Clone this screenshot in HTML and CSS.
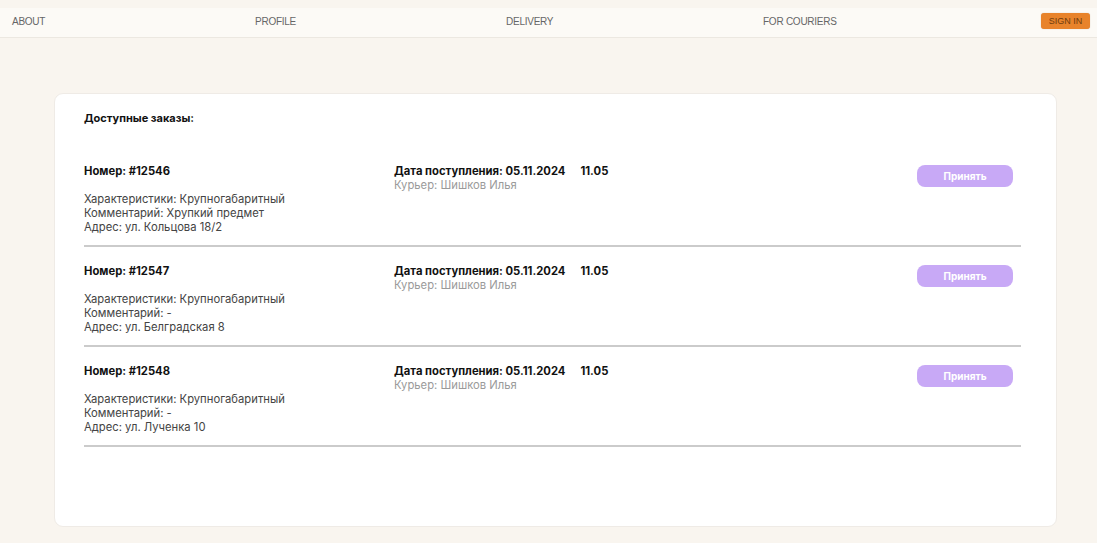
FILE: index.html
```html
<!DOCTYPE html>
<html lang="ru">
<head>
<meta charset="utf-8">
<title>Доступные заказы</title>
<link rel="stylesheet" href="styles.css">
</head>
<body>
<header class="topbar">
  <a class="nav-link" href="#">ABOUT</a>
  <a class="nav-link" href="#">PROFILE</a>
  <a class="nav-link" href="#">DELIVERY</a>
  <a class="nav-link" href="#">FOR COURIERS</a>
  <a class="signin" href="#">SIGN IN</a>
</header>
<main class="card">
  <h1 class="card-title">Доступные заказы:</h1>
  <div class="orders">
    <div class="order">
      <div class="order-info">
        <div class="order-num">Номер: #12546</div>
        <div class="order-details">
          <div>Характеристики: Крупногабаритный</div>
          <div>Комментарий: Хрупкий предмет</div>
          <div>Адрес: ул. Кольцова 18/2</div>
        </div>
      </div>
      <div class="order-meta">
        <div class="order-date">Дата поступления: 05.11.2024<span class="order-time">11.05</span></div>
        <div class="order-courier">Курьер: Шишков Илья</div>
      </div>
      <button class="accept">Принять</button>
    </div>
    <div class="order">
      <div class="order-info">
        <div class="order-num">Номер: #12547</div>
        <div class="order-details">
          <div>Характеристики: Крупногабаритный</div>
          <div>Комментарий: -</div>
          <div>Адрес: ул. Белградская 8</div>
        </div>
      </div>
      <div class="order-meta">
        <div class="order-date">Дата поступления: 05.11.2024<span class="order-time">11.05</span></div>
        <div class="order-courier">Курьер: Шишков Илья</div>
      </div>
      <button class="accept">Принять</button>
    </div>
    <div class="order">
      <div class="order-info">
        <div class="order-num">Номер: #12548</div>
        <div class="order-details">
          <div>Характеристики: Крупногабаритный</div>
          <div>Комментарий: -</div>
          <div>Адрес: ул. Лученка 10</div>
        </div>
      </div>
      <div class="order-meta">
        <div class="order-date">Дата поступления: 05.11.2024<span class="order-time">11.05</span></div>
        <div class="order-courier">Курьер: Шишков Илья</div>
      </div>
      <button class="accept">Принять</button>
    </div>
  </div>
</main>
</body>
</html>
```

FILE: styles.css
```css
* { box-sizing: border-box; }

body {
  margin: 0;
  background: #f9f5ef;
  font-family: Inter, "Noto Sans", sans-serif;
  color: #222;
}

.topbar {
  margin-top: 8px;
  height: 30px;
  background: #fcfaf6;
  border-bottom: 1px solid #ece8e1;
  display: grid;
  grid-template-columns: 243px 251px 257px 278px 49px;
  align-items: center;
  padding: 0 0 4px 12px;
}

.nav-link {
  margin-top: 2px;
  font-family: "Liberation Sans", Arial, sans-serif;
  font-size: 10px;
  color: #666;
  text-decoration: none;
  letter-spacing: -0.25px;
}

.signin {
  font-family: "Liberation Sans", Arial, sans-serif;
  font-size: 9px;
  color: #6e3c0e;
  text-decoration: none;
  background: #e8832b;
  border-radius: 3px;
  width: 49px;
  height: 16px;
  display: flex;
  align-items: center;
  justify-content: center;
  box-shadow: 0 0 1px rgba(120, 60, 0, 0.4);
}

.card {
  margin: 55px 0 0 54px;
  width: 1003px;
  height: 434px;
  background: #fff;
  border: 1px solid #efebe6;
  border-radius: 9px;
  padding: 17px 35px 0 29px;
}

.card-title {
  margin: 0 0 22px;
  font-size: 11px;
  line-height: 14px;
  font-weight: 700;
  color: #111;
}

.order {
  display: grid;
  grid-template-columns: 310px 1fr 96px;
  align-items: start;
  padding: 17px 8px 11px 0;
  border-bottom: 2px solid #cbcbcb;
  font-size: 11.25px;
  line-height: 14px;
}

.order-num,
.order-date {
  font-weight: 700;
  color: #111;
}

.order-details {
  margin-top: 14px;
  color: #444;
}

.order-time {
  margin-left: 15px;
}

.order-courier {
  color: #9a9a9a;
}

.accept {
  margin-top: 1px;
  width: 96px;
  height: 22px;
  border: none;
  border-radius: 8px;
  background: #c8a9f6;
  color: #fff;
  font-family: Inter, "Noto Sans", sans-serif;
  font-size: 10px;
  font-weight: 700;
  cursor: pointer;
}
```
